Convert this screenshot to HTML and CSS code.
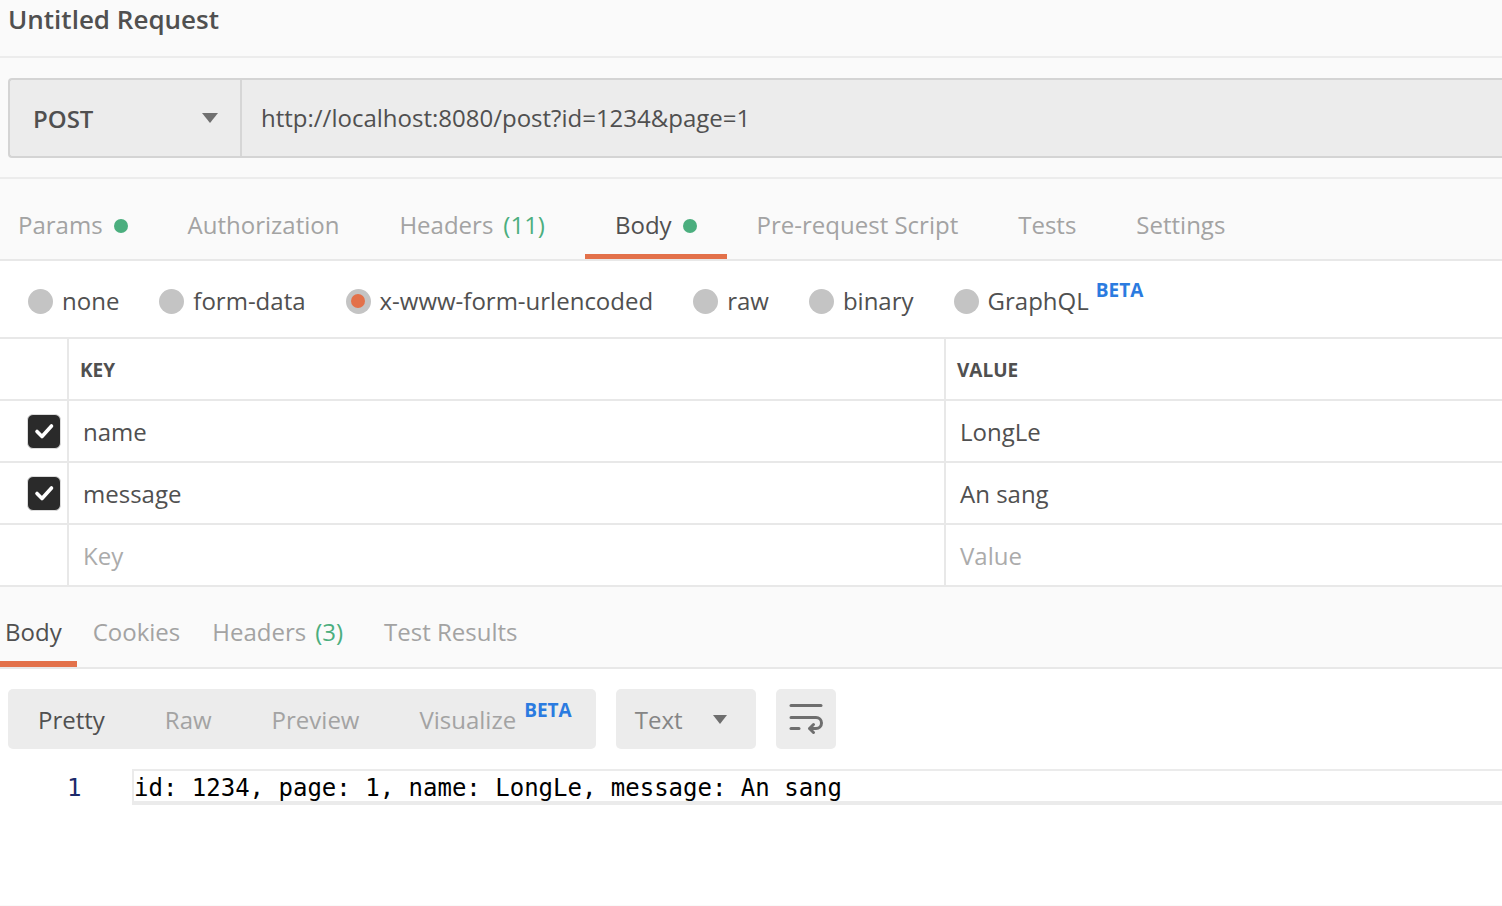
FILE: index.html
```html
<!DOCTYPE html>
<html lang="en">
<head>
<meta charset="utf-8">
<title>Untitled Request</title>
<link rel="stylesheet" href="styles.css">
</head>
<body>
<div class="app">
  <header class="title-bar"><h1>Untitled Request</h1></header>

  <div class="url-section">
    <div class="url-bar">
      <div class="method"><span>POST</span><span class="caret"></span></div>
      <div class="url">http://localhost:8080/post?id=1234&amp;page=1</div>
    </div>
  </div>

  <nav class="req-tabs">
    <div class="tab">Params<span class="dot"></span></div>
    <div class="tab">Authorization</div>
    <div class="tab tab-headers">Headers<span class="count">(11)</span></div>
    <div class="tab active">Body<span class="dot"></span></div>
    <div class="tab">Pre-request Script</div>
    <div class="tab">Tests</div>
    <div class="tab">Settings</div>
  </nav>

  <div class="body-types">
    <label class="radio"><span class="circle"></span>none</label>
    <label class="radio"><span class="circle"></span>form-data</label>
    <label class="radio"><span class="circle on"></span>x-www-form-urlencoded</label>
    <label class="radio"><span class="circle"></span>raw</label>
    <label class="radio"><span class="circle"></span>binary</label>
    <label class="radio"><span class="circle"></span>GraphQL<span class="beta radio-beta">BETA</span></label>
  </div>

  <div class="kv-table">
    <div class="kv-row kv-head">
      <div class="kv-cell kv-check"></div>
      <div class="kv-cell">KEY</div>
      <div class="kv-cell">VALUE</div>
    </div>
    <div class="kv-row">
      <div class="kv-cell kv-check"><span class="checkbox"><svg width="24" height="24" viewBox="0 0 24 24"><path d="M5 12.5 L10 17.5 L19.5 7" fill="none" stroke="#fff" stroke-width="3.6" stroke-linecap="round" stroke-linejoin="round"/></svg></span></div>
      <div class="kv-cell">name</div>
      <div class="kv-cell">LongLe</div>
    </div>
    <div class="kv-row">
      <div class="kv-cell kv-check"><span class="checkbox"><svg width="24" height="24" viewBox="0 0 24 24"><path d="M5 12.5 L10 17.5 L19.5 7" fill="none" stroke="#fff" stroke-width="3.6" stroke-linecap="round" stroke-linejoin="round"/></svg></span></div>
      <div class="kv-cell">message</div>
      <div class="kv-cell">An sang</div>
    </div>
    <div class="kv-row">
      <div class="kv-cell kv-check"></div>
      <div class="kv-cell placeholder">Key</div>
      <div class="kv-cell placeholder">Value</div>
    </div>
  </div>

  <section class="response">
    <nav class="res-tabs">
      <div class="res-tab active">Body</div>
      <div class="res-tab">Cookies</div>
      <div class="res-tab res-headers">Headers<span class="count">(3)</span></div>
      <div class="res-tab">Test Results</div>
    </nav>
    <div class="res-body">
      <div class="toolbar">
        <div class="seg">
          <div class="seg-item active">Pretty</div>
          <div class="seg-item">Raw</div>
          <div class="seg-item">Preview</div>
          <div class="seg-item last">Visualize<span class="beta seg-beta">BETA</span></div>
        </div>
        <div class="select"><span>Text</span><span class="caret small"></span></div>
        <div class="wrap-btn">
          <svg width="60" height="60" viewBox="0 0 60 60"><g fill="none" stroke="#6e6e6e" stroke-width="3" stroke-linecap="round" stroke-linejoin="round"><path d="M15 16.5 H45"/><path d="M15 28.5 H40 a5.5 5.5 0 0 1 0 11 H34"/><path d="M37.5 35.5 L33.5 39.5 L37.5 43.5"/><path d="M15 39.5 H23"/></g></svg>
        </div>
      </div>
      <div class="code-line">
        <div class="ln">1</div>
        <div class="code-text">id: 1234, page: 1, name: LongLe, message: An sang</div>
      </div>
    </div>
  </section>
</div>
</body>
</html>
```

FILE: styles.css
```css
* { box-sizing: border-box; }

body {
  margin: 0;
  background: #fafafa;
  font-family: "Open Sans", "Noto Sans", sans-serif;
  color: #505050;
  width: 1502px;
  height: 906px;
  overflow: hidden;
}

.title-bar {
  height: 58px;
  border-bottom: 2px solid #ececec;
  padding-left: 8px;
}
.title-bar h1 {
  margin: 0;
  font-size: 26px;
  font-weight: 600;
  line-height: 38px;
  color: #505050;
}

.url-section {
  padding: 20px 0 19px 8px;
  border-bottom: 2px solid #ececec;
}
.url-bar {
  display: flex;
  height: 80px;
  border: 2px solid #d4d4d4;
  border-right: none;
  border-radius: 4px 0 0 4px;
  background: #ececec;
}
.method {
  width: 232px;
  border-right: 2px solid #d6d6d6;
  display: flex;
  align-items: center;
  justify-content: space-between;
  padding: 0 22px 0 23px;
  font-size: 24px;
  font-weight: 600;
  color: #505050;
}
.caret {
  width: 0;
  height: 0;
  border-left: 8px solid transparent;
  border-right: 8px solid transparent;
  border-top: 10px solid #707070;
}
.caret.small {
  border-left-width: 7.5px;
  border-right-width: 7.5px;
  border-top-width: 9px;
  border-top-color: #6e6e6e;
}
.url {
  display: flex;
  align-items: center;
  padding-left: 19px;
  padding-bottom: 2px;
  font-size: 24px;
  color: #505050;
}

.req-tabs {
  display: flex;
  height: 82px;
  border-bottom: 2px solid #e8e8e8;
}
.tab {
  height: 80px;
  padding: 28px 30px 0;
  border-bottom: 5px solid transparent;
  font-size: 24px;
  line-height: 36px;
  color: #a3a3a3;
  display: flex;
  align-items: flex-start;
  white-space: pre;
}
.tab:first-child { padding-left: 18px; }
.tab.tab-headers { padding-right: 40px; }
.tab.active {
  color: #505050;
  border-bottom-color: #e3714a;
}
.dot {
  width: 14px;
  height: 14px;
  border-radius: 50%;
  background: #4bae7e;
  margin: 12px 0 0 11px;
}
.count {
  color: #4bae7e;
  margin-left: 10px;
}

.body-types {
  display: flex;
  align-items: center;
  gap: 40px;
  height: 78px;
  padding: 4px 0 0 28px;
  background: #fff;
  border-bottom: 2px solid #e8e8e8;
}
.radio {
  display: flex;
  align-items: center;
  gap: 9px;
  font-size: 24px;
  line-height: 32px;
  color: #505050;
}
.circle {
  width: 25px;
  height: 25px;
  border-radius: 50%;
  background: #c4c4c4;
  display: flex;
  align-items: center;
  justify-content: center;
}
.circle.on::after {
  content: "";
  width: 14px;
  height: 14px;
  border-radius: 50%;
  background: #e3714a;
}
.beta {
  font-size: 19px;
  font-weight: 700;
  line-height: 20px;
  color: #2b7be0;
}
.radio-beta {
  align-self: flex-start;
  margin: -5px 0 0 -2px;
}

.kv-table { background: #fff; }
.kv-row {
  display: grid;
  grid-template-columns: 67px 877px 1fr;
  height: 62px;
  border-bottom: 2px solid #e8e8e8;
}
.kv-cell {
  display: flex;
  align-items: center;
  border-left: 2px solid #e8e8e8;
  padding-left: 14px;
  font-size: 24px;
  color: #505050;
}
.kv-cell.kv-check {
  border-left: none;
  padding-left: 27px;
}
.kv-head .kv-cell {
  font-size: 19px;
  font-weight: 700;
  padding-left: 11px;
  padding-top: 2px;
}
.placeholder { color: #ababab; }
.checkbox {
  width: 34px;
  height: 35px;
  border-radius: 6px;
  background: #2a2a2a;
  border: 1px solid #dcdcdc;
  display: flex;
  align-items: center;
  justify-content: center;
}

.response { background: #fafafa; }
.res-tabs {
  display: flex;
  height: 82px;
  border-bottom: 2px solid #e8e8e8;
}
.res-tab {
  height: 80px;
  padding: 27px 16px 0;
  border-bottom: 6px solid transparent;
  font-size: 24px;
  line-height: 36px;
  color: #a3a3a3;
  white-space: pre;
}
.res-tab:first-child { padding-left: 5px; padding-right: 15px; }
.res-tab.res-headers { padding-right: 25px; }
.res-headers .count { margin-left: 9px; }
.res-tab.active {
  color: #505050;
  border-bottom-color: #e3714a;
}

.res-body {
  background: #fff;
  height: 236px;
  padding: 20px 0 0 8px;
}
.toolbar {
  display: flex;
  gap: 20px;
  height: 60px;
}
.seg {
  display: flex;
  background: #ececec;
  border-radius: 5px;
  padding-right: 24px;
}
.seg-item {
  display: flex;
  align-items: center;
  padding: 0 30px;
  font-size: 24px;
  color: #a3a3a3;
}
.seg-item.active { color: #505050; }
.seg-item.last { padding-right: 0; }
.seg-beta {
  align-self: flex-start;
  margin: 11px 0 0 8px;
}
.select {
  width: 140px;
  background: #ececec;
  border-radius: 5px;
  display: flex;
  align-items: center;
  justify-content: space-between;
  padding: 0 29px 0 19px;
  font-size: 24px;
  color: #858585;
}
.wrap-btn {
  width: 60px;
  background: #ececec;
  border-radius: 5px;
}
.wrap-btn svg { display: block; }

.code-line {
  display: flex;
  margin-top: 20px;
  font-family: "DejaVu Sans Mono", "Liberation Mono", monospace;
  font-size: 24px;
}
.ln {
  width: 124px;
  padding-left: 59px;
  line-height: 38px;
  color: #1c2a6a;
}
.code-text {
  flex: 1;
  height: 36px;
  background: #fff;
  border: 2px solid #ebebeb;
  border-bottom-width: 4px;
  border-right: none;
  line-height: 34px;
  color: #000;
  white-space: pre;
}
```
